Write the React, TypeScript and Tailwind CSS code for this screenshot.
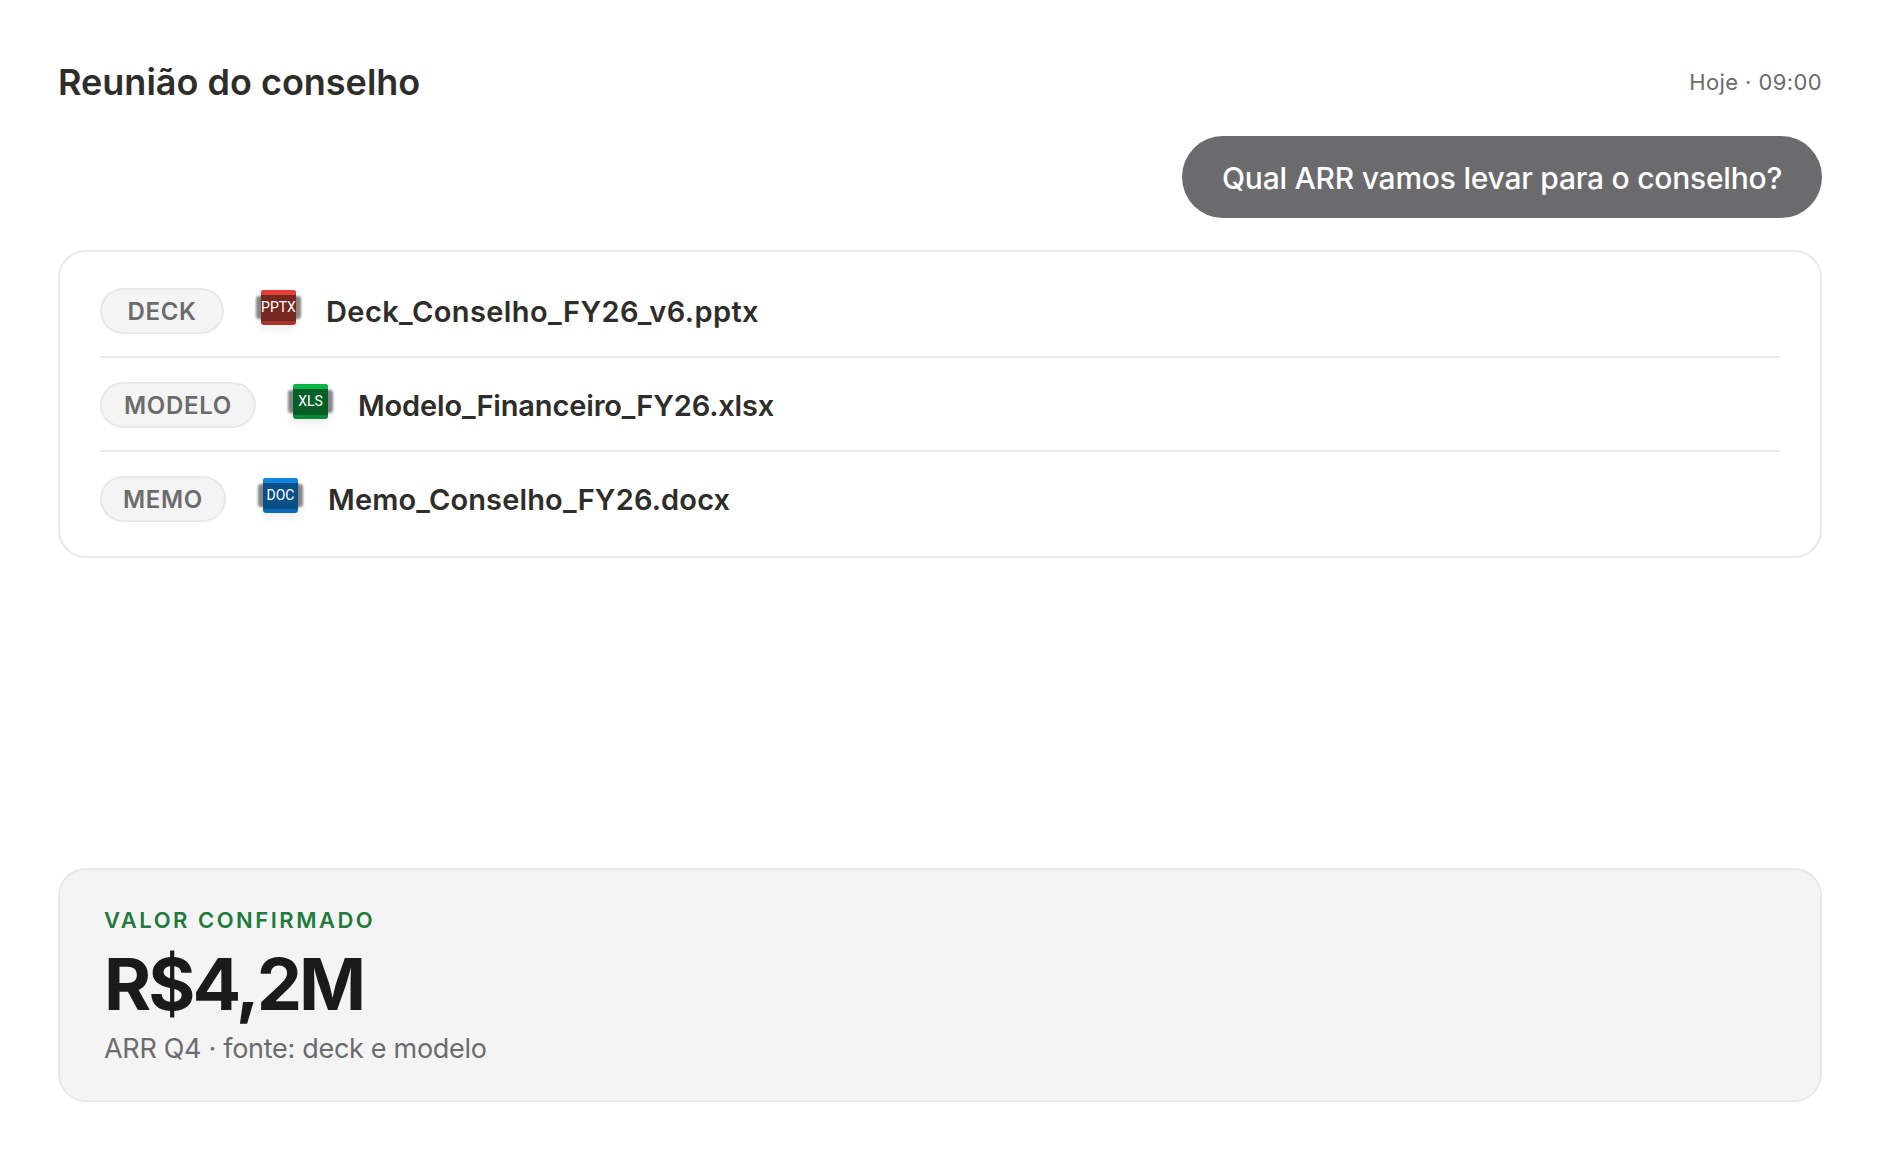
const FONT = "font-['Inter','Noto_Sans',sans-serif]"

const FILES = [
  { tag: "DECK", name: "Deck_Conselho_FY26_v6.pptx", ext: "PPTX", top: "bg-[#e53f33]", bottom: "bg-[#a9342c]", inner: "bg-[#752820]", tagW: "w-[124px]", track: "tracking-[0.4px]" },
  { tag: "MODELO", name: "Modelo_Financeiro_FY26.xlsx", ext: "XLS", top: "bg-[#0cb447]", bottom: "bg-[#098a38]", inner: "bg-[#075f28]", tagW: "w-[156px]", track: "tracking-[-0.15px]" },
  { tag: "MEMO", name: "Memo_Conselho_FY26.docx", ext: "DOC", top: "bg-[#1086e0]", bottom: "bg-[#0b6ab6]", inner: "bg-[#0a4f87]", tagW: "w-[126px]", track: "tracking-[0.15px]" },
]

function FileIcon({ ext, top, bottom, inner }: { ext: string; top: string; bottom: string; inner: string }) {
  return (
    <div className={`relative h-[35px] w-[35px] shrink-0 -translate-y-[4px] rounded-[3px] shadow-[0_4px_8px_rgba(0,0,0,0.08)] ${bottom}`}>
      <div className={`absolute inset-x-0 top-0 h-[6px] rounded-t-[3px] ${top}`} />
      <div className="absolute -inset-x-[5px] top-[6px] bottom-[6px] rounded-[3px] bg-[#555]/70 blur-[1px]" />
      <div className={`absolute inset-x-0 top-[5px] bottom-[4px] ${inner}`} />
      <span className="absolute inset-x-[-4px] top-[5px] bottom-[4px] flex items-center justify-center font-['Roboto',sans-serif] text-[14px] font-normal text-white">
        {ext}
      </span>
    </div>
  )
}

export default function App() {
  return (
    <div className={`flex h-[1160px] w-[1880px] flex-col bg-white px-[58px] pt-[58px] pb-[58px] ${FONT}`}>
      {/* Header */}
      <div className="flex h-[48px] items-center justify-between">
        <h1 className="text-[36px] font-semibold text-[#2e2d2a]">Reunião do conselho</h1>
        <span className="text-[22px] tracking-[0.4px] text-[#6b6b6d]">Hoje · 09:00</span>
      </div>

      {/* Question bubble */}
      <div className="mt-[30px] flex justify-end">
        <div className="flex h-[82px] w-[640px] items-center justify-center rounded-[41px] bg-[#6b6b6d] pt-[3px] text-[30px] font-medium tracking-[-0.23px] text-white">
          Qual ARR vamos levar para o conselho?
        </div>
      </div>

      {/* Files */}
      <div className="mt-[32px] rounded-[28px] border-2 border-[#e8e8ec] px-[40px] pt-[12px] pb-[10px]">
        {FILES.map((f, i) => (
          <div key={f.tag} className={`flex h-[94px] items-center border-b-2 pt-[2px] ${i < 2 ? "border-[#e8e8ec]" : "border-transparent"}`}>
            <span className={`flex h-[46px] items-center justify-center rounded-full border-2 border-[#e8e8ec] bg-[#f4f4f5] pt-[1px] text-[24px] font-semibold tracking-[0.7px] text-[#6b6b6d] ${f.tagW}`}>
              {f.tag}
            </span>
            <div className="ml-[37px]">
              <FileIcon ext={f.ext} top={f.top} bottom={f.bottom} inner={f.inner} />
            </div>
            <span className={`ml-[30px] pt-[2px] text-[29px] font-semibold text-[#2e2d2a] ${f.track}`}>{f.name}</span>
          </div>
        ))}
      </div>

      {/* Confirmed value */}
      <div className="mt-auto h-[234px] rounded-[28px] border-2 border-[#e8e8ec] bg-[#f4f4f5] px-[44px] pt-[34px]">
        <div className="text-[22px] font-semibold tracking-[2.5px] text-[#1f7a3d]">VALOR CONFIRMADO</div>
        <div className="mt-[8px] text-[72px] leading-[78px] font-bold tracking-[-3px] text-[#1a1a1a]">R$4,2M</div>
        <div className="mt-[6px] text-[27px] tracking-[-0.3px] text-[#6b6b6d]">ARR Q4 · fonte: deck e modelo</div>
      </div>
    </div>
  )
}
